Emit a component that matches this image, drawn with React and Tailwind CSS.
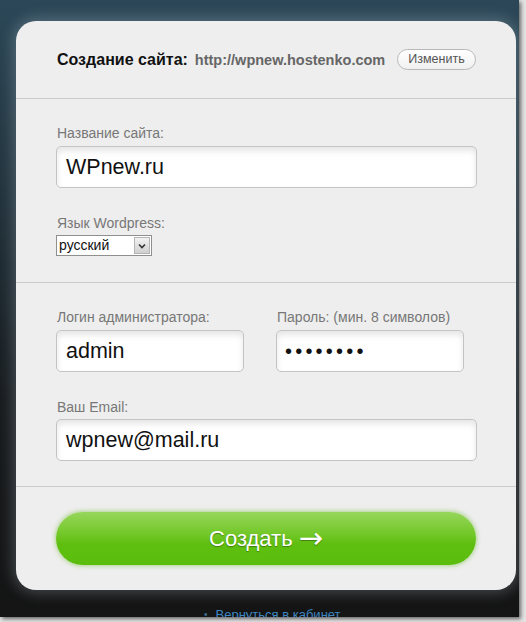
export default function App() {
  const font = { fontFamily: '"Liberation Sans", Arial, sans-serif' };
  return (
    <div className="w-[526px] h-[622px] bg-[#e4e4e4] overflow-hidden" style={font}>
      <div className="w-[519px] h-[617px] overflow-hidden bg-[linear-gradient(180deg,#2c4858_0%,#23343e_30%,#181c1f_65%,#141414_100%)] shadow-[2px_2px_4px_rgba(0,0,0,0.55)] pt-[21px] pl-[16px] flex flex-col">
        <div className="w-[500px] h-[569px] shrink-0 bg-[#eeeeee] rounded-[20px] shadow-[0_0_14px_3px_rgba(190,210,220,0.28)] flex flex-col">
          {/* header */}
          <div className="h-[78px] shrink-0 border-b border-[#cccccc] px-[40px] flex items-center justify-between">
            <div className="flex items-baseline gap-[7px] pl-[1px]">
              <span className="text-[16px] font-bold text-[#111]">Создание сайта:</span>
              <span className="text-[14.5px] font-bold text-[#666]">http://wpnew.hostenko.com</span>
            </div>
            <div className="w-[79px] h-[21px] rounded-full border border-[#b8b8b8] bg-[linear-gradient(180deg,#ffffff,#f0f0f0)] flex items-center justify-center text-[12.5px] text-[#555]">
              Изменить
            </div>
          </div>

          {/* site name + language */}
          <div className="h-[184px] shrink-0 border-b border-[#cccccc] px-[40px] pt-[26px]">
            <div className="text-[14px] leading-[16px] text-[#777] pl-[1px]">Название сайта:</div>
            <div className="mt-[5px] h-[42px] w-[421px] rounded-[5px] border border-[#c4c4c4] bg-white shadow-[inset_0_4px_6px_rgba(0,0,0,0.10)] flex items-center pl-[9px] text-[21.5px] text-[#111]">
              WPnew.ru
            </div>
            <div className="mt-[27px] text-[14px] leading-[16px] text-[#777] pl-[1px]">Язык Wordpress:</div>
            <div className="mt-[4px] w-[96px] h-[21px] border border-[#8f8f8f] bg-white flex items-center justify-between">
              <span className="text-[14px] text-[#111] pl-[2px]">русский</span>
              <span className="w-[16px] h-[17px] mr-[1px] border border-[#b5b5b5] bg-[linear-gradient(180deg,#f2f2f2,#cfcfcf)] flex items-center justify-center">
                <svg width="8" height="6" viewBox="0 0 8 6">
                  <path d="M1 1.5 L4 4.5 L7 1.5" fill="none" stroke="#333" strokeWidth="1.6" />
                </svg>
              </span>
            </div>
          </div>

          {/* login / password / email */}
          <div className="h-[204px] shrink-0 border-b border-[#cccccc] px-[40px] pt-[26px]">
            <div className="flex gap-[32px]">
              <div className="w-[188px]">
                <div className="text-[14px] leading-[16px] text-[#777] pl-[1px] whitespace-nowrap">Логин администратора:</div>
                <div className="mt-[5px] h-[42px] rounded-[5px] border border-[#c4c4c4] bg-white shadow-[inset_0_4px_6px_rgba(0,0,0,0.10)] flex items-center pl-[9px] text-[21.5px] text-[#111]">
                  admin
                </div>
              </div>
              <div className="w-[188px]">
                <div className="text-[14px] leading-[16px] text-[#777] pl-[1px] whitespace-nowrap">Пароль: (мин. 8 символов)</div>
                <div className="mt-[5px] h-[42px] rounded-[5px] border border-[#c4c4c4] bg-white shadow-[inset_0_4px_6px_rgba(0,0,0,0.10)] flex items-center pl-[8px] text-[20px] text-[#111] tracking-[3.2px]">
                  ••••••••
                </div>
              </div>
            </div>
            <div className="mt-[27px] text-[14px] leading-[16px] text-[#777] pl-[1px]">Ваш Email:</div>
            <div className="mt-[4px] h-[42px] w-[421px] rounded-[5px] border border-[#c4c4c4] bg-white shadow-[inset_0_4px_6px_rgba(0,0,0,0.10)] flex items-center pl-[9px] text-[21.5px] text-[#111]">
              wpnew@mail.ru
            </div>
          </div>

          {/* submit */}
          <div className="flex-1 px-[40px] pt-[25px]">
            <div className="w-[420px] h-[53px] rounded-full bg-[linear-gradient(180deg,#97d65c_0%,#74c82a_40%,#5fbf10_60%,#5abd0c_100%)] shadow-[0_0_4px_1px_rgba(120,190,60,0.55)] flex items-center justify-center gap-[6px] text-[22px] text-white [text-shadow:0_1px_1px_rgba(0,0,0,0.35)]">
              <span>Создать</span>
              <span style={{ fontFamily: '"DejaVu Sans", sans-serif' }} className="text-[29px] leading-none">→</span>
            </div>
          </div>
        </div>

        <div className="mt-[17px] flex items-center gap-[8px] pl-[188px] text-[13px] leading-[15px]">
          <span className="text-[#3b6f96] text-[10px]">•</span>
          <span className="text-[#3e86c0]">Вернуться в кабинет</span>
        </div>
      </div>
    </div>
  );
}
